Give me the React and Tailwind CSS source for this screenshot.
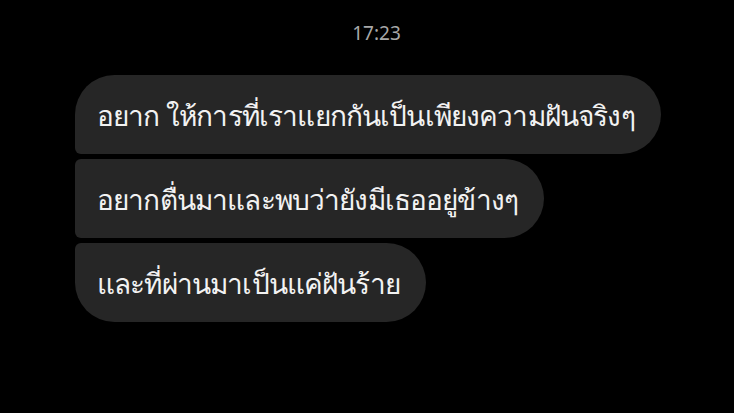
const messages = [
  { text: 'อยาก ให้การที่เราแยกกันเป็นเพียงความฝันจริงๆ', shape: 'rounded-[40px] rounded-bl-[6px]' },
  { text: 'อยากตื่นมาและพบว่ายังมีเธออยู่ข้างๆ', shape: 'rounded-[40px] rounded-l-[6px]' },
  { text: 'และที่ผ่านมาเป็นแค่ฝันร้าย', shape: 'rounded-[40px] rounded-tl-[6px]' },
];

export default function App() {
  return (
    <div className="w-[734px] h-[413px] bg-black overflow-hidden font-['Noto_Sans','DejaVu_Sans',sans-serif]">
      <div className="pt-[21px] pl-[19px] text-center text-[19px] leading-[24px] text-[#a8a8a8]">17:23</div>
      <div className="mt-[30px] pl-[75px] flex flex-col items-start gap-[5px]">
        {messages.map((m, i) => (
          <div
            key={i}
            className={`h-[79px] flex items-center pl-[22px] pr-[26px] bg-[#262626] text-[#f2f2f2] text-[28px] tracking-[-0.85px] ${m.shape}`}
          >
            {m.text}
          </div>
        ))}
      </div>
    </div>
  );
}
